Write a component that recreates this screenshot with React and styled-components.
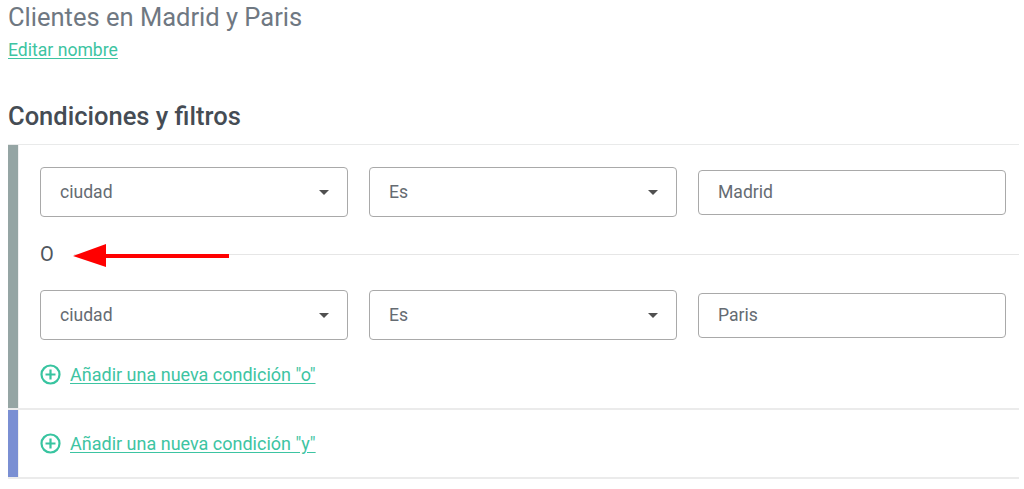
import React from "react";
import styled, { createGlobalStyle } from "styled-components";

const Global = createGlobalStyle`
  html, body { margin: 0; padding: 0; background: #fff; }
  body { font-family: Roboto, "Liberation Sans", Arial, sans-serif; }
`;

const Page = styled.div`
  padding: 0 5px 0 8px;
`;

const Title = styled.h1`
  margin: 0;
  padding-top: 2px;
  font-size: 25.5px;
  line-height: 30px;
  font-weight: 400;
  color: #6f7882;
`;

const Link = styled.a`
  color: #3dc4a2;
  text-decoration: underline;
  text-underline-offset: 2px;
  font-size: ${(p) => p.$size || 18}px;
  cursor: pointer;
`;

const EditLine = styled.div`
  margin-top: 8px;
  line-height: 20px;
`;

const Heading = styled.h2`
  margin: 40px 0 0;
  font-size: 25.5px;
  line-height: 30px;
  font-weight: 500;
  color: #454c54;
`;

const Blocks = styled.div`
  margin-top: 13px;
  border-top: 1px solid #e9eaea;
`;

const Block = styled.div`
  display: flex;
  border-bottom: 2px solid #ebebeb;
`;

const Bar = styled.div`
  width: 10px;
  flex: none;
  background: ${(p) => p.$color};
`;

const Content = styled.div`
  flex: 1;
  border-left: 1px solid #f0f0f0;
  padding: ${(p) => p.$pad};
`;

const Fields = styled.div`
  display: grid;
  grid-template-columns: repeat(3, 308px);
  column-gap: 21px;
  align-items: center;
`;

const SelectBox = styled.div`
  height: 50px;
  box-sizing: border-box;
  border: 1px solid #a9a9a9;
  border-radius: 4px;
  display: flex;
  align-items: center;
  justify-content: space-between;
  padding: 0 18px 0 19px;
  font-size: 17.6px;
  color: #656b72;
`;

const Caret = styled.span`
  width: 0;
  height: 0;
  border-left: 5px solid transparent;
  border-right: 5px solid transparent;
  border-top: 5px solid #505050;
`;

const InputBox = styled.div`
  height: 45px;
  box-sizing: border-box;
  border: 1px solid #a9a9a9;
  border-radius: 4px;
  display: flex;
  align-items: center;
  padding: 0 19px;
  font-size: 17.6px;
  color: #656b72;
`;

const OrRow = styled.div`
  position: relative;
  height: 73px;
  display: flex;
  align-items: center;
`;

const OrLabel = styled.span`
  font-size: 20px;
  font-weight: 400;
  color: #4f565e;
  width: 22px;
`;

const OrLine = styled.div`
  flex: 1;
  height: 1px;
  margin-left: 12px;
  margin-top: 2px;
  background: #e6e6e6;
`;

const Arrow = styled.svg`
  position: absolute;
  left: 32px;
  top: 26px;
`;

const AddRow = styled.div`
  display: flex;
  align-items: center;
  gap: 9px;
  height: 20px;
  margin-top: ${(p) => p.$top || 0}px;
`;

const Plus = () => (
  <svg width="21" height="21" viewBox="0 0 21 21">
    <circle cx="10.5" cy="10.5" r="9" fill="none" stroke="#38c4a0" strokeWidth="2.2" />
    <path d="M10.5 5.5v10M5.5 10.5h10" stroke="#38c4a0" strokeWidth="2.2" />
  </svg>
);

const ConditionRow = ({ field, op, value }) => (
  <Fields>
    <SelectBox>
      {field}
      <Caret />
    </SelectBox>
    <SelectBox>
      {op}
      <Caret />
    </SelectBox>
    <InputBox>{value}</InputBox>
  </Fields>
);

export default function App() {
  return (
    <Page>
      <Global />
      <Title>Clientes en Madrid y Paris</Title>
      <EditLine>
        <Link $size={17.6}>Editar nombre</Link>
      </EditLine>
      <Heading>Condiciones y filtros</Heading>
      <Blocks>
        <Block>
          <Bar $color="#95a5a4" />
          <Content $pad="22px 0 24px 21px">
            <ConditionRow field="ciudad" op="Es" value="Madrid" />
            <OrRow>
              <OrLabel>O</OrLabel>
              <OrLine />
              <Arrow width="160" height="26" viewBox="0 0 160 26">
                <polygon points="1,13 34,1 34,24" fill="#ff0000" />
                <rect x="33" y="11" width="124" height="4" fill="#ff0000" />
              </Arrow>
            </OrRow>
            <ConditionRow field="ciudad" op="Es" value="Paris" />
            <AddRow $top={24}>
              <Plus />
              <Link>Añadir una nueva condición "o"</Link>
            </AddRow>
          </Content>
        </Block>
        <Block>
          <Bar $color="#7a8fd3" />
          <Content $pad="23px 0 24px 21px">
            <AddRow>
              <Plus />
              <Link>Añadir una nueva condición "y"</Link>
            </AddRow>
          </Content>
        </Block>
      </Blocks>
    </Page>
  );
}
